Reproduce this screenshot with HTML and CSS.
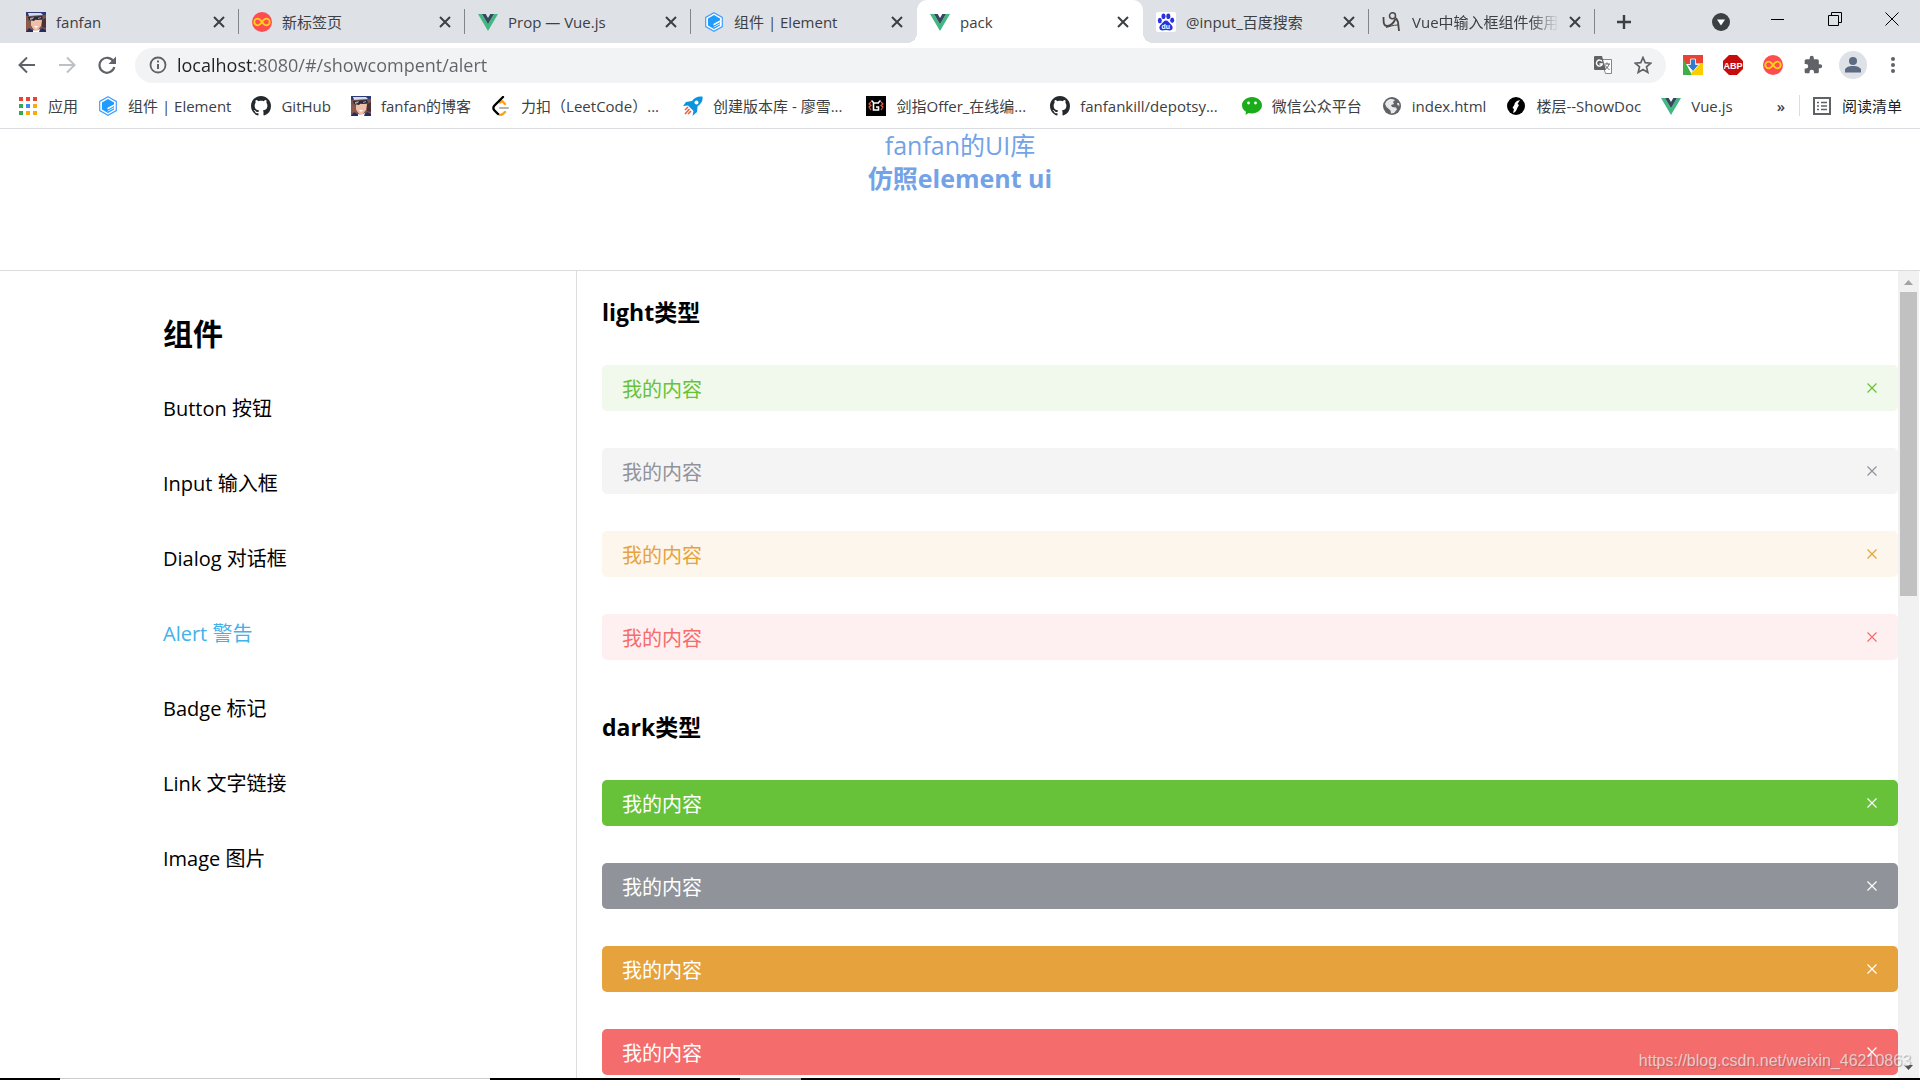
FILE: index.html
```html
<!DOCTYPE html>
<html lang="zh-CN">
<head>
  <meta charset="UTF-8">
  <title>pack</title>
  <link rel="stylesheet" href="styles.css">
</head>
<body>
  <svg class="sprite" aria-hidden="true">
    <symbol id="i-face" viewBox="0 0 20 20">
      <rect width="20" height="20" fill="#7a5550"/>
      <path d="M0 0h20v3L0 4z" fill="#2c3a78"/>
      <path d="M2 1h13l2 2-14 1z" fill="#d9dbe8"/>
      <path d="M5 8h11l-1 6-4 5H9l-4-5z" fill="#f0bfa8"/>
      <path d="M2 5l14-1 1 3-6 1-1-1-2 2-5-1z" fill="#2c2a38"/>
      <path d="M4 6l4-1-1 2-3 1zM12 6l3-1v1l-3 1z" fill="#9aa3bd"/>
      <path d="M0 8l4 2 2 6-4 2-2-3z" fill="#8d5a4c"/>
      <path d="M16 8l4-2v10l-4-1z" fill="#4d2f36"/>
      <path d="M8 14h4l-2 2z" fill="#fff"/>
      <path d="M0 20l3-4 5 3v1zM12 20l4-4 4 2v2z" fill="#232c63"/>
      <path d="M7 18l3 1 4-2-1 3H7z" fill="#fff"/>
    </symbol>
    <symbol id="i-loop" viewBox="0 0 20 20">
      <circle cx="10" cy="10" r="10" fill="#ff4d4f"/>
      <path d="M10 10C8 7.300 7 6.600 5.700 6.600a3.400 3.400 0 0 0 0 6.800C7 13.400 8 12.700 10 10s3-3.400 4.300-3.400a3.400 3.400 0 0 1 0 6.800C13 13.400 12 12.700 10 10z" fill="none" stroke="#ffd21a" stroke-width="1.800"/>
    </symbol>
    <symbol id="i-vue" viewBox="0 0 20 20">
      <path d="M0 2h4l6 10.200L16 2h4L10 19z" fill="#41b883"/>
      <path d="M4 2h3.700L10 6l2.300-4H16l-6 10.200z" fill="#35495e"/>
    </symbol>
    <symbol id="i-element" viewBox="0 0 20 20">
      <path d="M10 .7l8.300 4.700v9.200L10 19.300l-8.300-4.700V5.400z" fill="#fff" stroke="#409eff" stroke-width="1.200"/>
      <path d="M10 3l6 3.400v2L9.500 12v1.300L16 9.700v1.600l-6.500 3.600v.9l6.500-3.500v1.300L10 17l-6-3.500v-7z" fill="#1e9bff"/>
      <path d="M16 8.400L9.800 11.800v1.600L16 10z" fill="#fff"/>
    </symbol>
    <symbol id="i-github" viewBox="0 0 16 16">
      <path fill="#24292e" d="M8 0C3.580 0 0 3.580 0 8c0 3.540 2.290 6.530 5.470 7.590.4.070.55-.17.55-.38 0-.19-.01-.82-.01-1.490-2.010.37-2.530-.49-2.690-.94-.09-.23-.48-.94-.82-1.130-.28-.15-.68-.52-.01-.53.63-.01 1.080.58 1.230.82.72 1.210 1.870.87 2.330.66.070-.52.28-.87.51-1.070-1.780-.2-3.640-.89-3.640-3.950 0-.87.31-1.590.82-2.150-.08-.2-.36-1.020.08-2.120 0 0 .67-.21 2.200.82.64-.18 1.320-.27 2-.27s1.360.09 2 .27c1.530-1.040 2.200-.82 2.200-.82.44 1.100.16 1.920.08 2.120.51.56.82 1.270.82 2.150 0 3.070-1.870 3.750-3.650 3.950.29.25.54.73.54 1.480 0 1.070-.01 1.930-.01 2.200 0 .21.15.46.55.38A8.010 8.010 0 0 0 16 8c0-4.420-3.580-8-8-8z"/>
    </symbol>
    <symbol id="i-close" viewBox="0 0 12 12">
      <path d="M1 1l10 10M11 1L1 11" fill="none" stroke="currentColor" stroke-width="2"/>
    </symbol>
    <symbol id="i-thin-close" viewBox="0 0 10 10">
      <path d="M.5.5l9 9M9.500.5l-9 9" fill="none" stroke="currentColor" stroke-width="1.200"/>
    </symbol>
  </svg>

  <header class="browser">
    <div class="tab-strip">
      <div class="tab"><svg class="icon"><use href="#i-face"/></svg><a class="tab-title" href="#">fanfan</a><button class="tab-close" aria-label="关闭"><svg><use href="#i-close"/></svg></button></div>
      <div class="tab"><svg class="icon"><use href="#i-loop"/></svg><a class="tab-title" href="#">新标签页</a><button class="tab-close" aria-label="关闭"><svg><use href="#i-close"/></svg></button></div>
      <div class="tab"><svg class="icon"><use href="#i-vue"/></svg><a class="tab-title" href="#">Prop — Vue.js</a><button class="tab-close" aria-label="关闭"><svg><use href="#i-close"/></svg></button></div>
      <div class="tab before-active"><svg class="icon"><use href="#i-element"/></svg><a class="tab-title" href="#">组件 | Element</a><button class="tab-close" aria-label="关闭"><svg><use href="#i-close"/></svg></button></div>
      <div class="tab active"><svg class="icon"><use href="#i-vue"/></svg><a class="tab-title" href="#">pack</a><button class="tab-close" aria-label="关闭"><svg><use href="#i-close"/></svg></button></div>
      <div class="tab"><svg class="icon" viewBox="0 0 20 20">
          <rect width="20" height="20" rx="2" fill="#fff"/>
          <g fill="#2932e1"><ellipse cx="3.800" cy="8.500" rx="2" ry="2.700"/><ellipse cx="7.500" cy="4.200" rx="2" ry="2.800"/><ellipse cx="12.300" cy="4.200" rx="2" ry="2.800"/><ellipse cx="16.200" cy="8.200" rx="2" ry="2.700"/><path d="M10 8.500c2 0 3 2 4.500 3.500 2 2 2.500 3 2 4.500-1 3-4 1.500-6.500 1.500s-5.500 1.500-6.500-1.500c-.5-1.500 0-2.500 2-4.500C7 10.500 8 8.500 10 8.500z"/></g>
          <text class="du" x="5.500" y="16.500">du</text>
        </svg><a class="tab-title" href="#">@input_百度搜索</a><button class="tab-close" aria-label="关闭"><svg><use href="#i-close"/></svg></button></div>
      <div class="tab"><svg class="icon" viewBox="0 0 20 20" fill="none" stroke="#4b4545">
          <circle cx="10.500" cy="3.800" r="3" stroke-width="1.500"/><path d="M1.500 5c0 6 0 9 4 9 3 0 6-3 8-7" stroke-width="1.800"/><path d="M14 6l2 4 1 9" stroke-width="1.800"/><path d="M4 15.500c4-1 7-2.500 12-2.500" />
        </svg><a class="tab-title fade" href="#">Vue中输入框组件使用</a><button class="tab-close" aria-label="关闭"><svg><use href="#i-close"/></svg></button></div>
      <button class="new-tab" aria-label="新标签页"><svg viewBox="0 0 16 16"><path d="M8 1v14M1 8h14" stroke="currentColor" stroke-width="2.400"/></svg></button>
      <div class="window-buttons">
        <button aria-label="搜索标签页"><svg viewBox="0 0 18 18"><circle cx="9" cy="9" r="9" fill="#3c4043"/><path d="M5 6.500h8L9 12.500z" fill="#fff"/></svg></button>
        <button aria-label="最小化"><svg class="line" viewBox="0 0 14 14"><path d="M0 7.500h13"/></svg></button>
        <button aria-label="还原"><svg class="line" viewBox="0 0 14 14"><path d="M.5 3.500h10v10h-10zM3.500 3V.5h10v10H11"/></svg></button>
        <button aria-label="关闭窗口"><svg class="line" viewBox="0 0 14 14"><path d="M.5.5l13 13M13.500.5l-13 13"/></svg></button>
      </div>
    </div>

    <div class="toolbar">
      <button aria-label="后退"><svg viewBox="0 0 18 18"><path d="M17 9H2M9 1.500L1.500 9 9 16.500" fill="none" stroke="#5f6368" stroke-width="2"/></svg></button>
      <button aria-label="前进"><svg viewBox="0 0 18 18"><path d="M1 9h15M9 1.500L16.500 9 9 16.500" fill="none" stroke="#bdc1c6" stroke-width="2"/></svg></button>
      <button aria-label="刷新"><svg viewBox="0 0 18 18"><path d="M15.500 5.500A7.500 7.500 0 1 0 16.300 11" fill="none" stroke="#5f6368" stroke-width="2.200"/><path d="M18 .5V8h-7.500z" fill="#5f6368"/></svg></button>
      <div class="address">
        <svg class="info" viewBox="0 0 18 18"><circle cx="9" cy="9" r="7.500" fill="none" stroke="#5f6368" stroke-width="1.800"/><path d="M9 8v5M9 4.500v2" stroke="#5f6368" stroke-width="2"/></svg>
        <input class="url" type="text" aria-label="地址" value="localhost:8080/#/showcompent/alert">
        <button aria-label="翻译"><svg viewBox="0 0 18 18"><path d="M7 3.500h10.500v14h-6z" fill="#fff" stroke="#80868b"/><path d="M0 1a1 1 0 0 1 1-1h7l4 14H1a1 1 0 0 1-1-1z" fill="#5f6368"/><path d="M8 5.500A3 3 0 1 0 8.300 8H5.500" fill="none" stroke="#fff" stroke-width="1.400"/><path d="M10.500 8h5.500M13 6.500V8M15 8c-.5 2.500-2 4-3.500 5M11.500 9.500c1 2 2.500 3.500 4 4" fill="none" stroke="#5f6368"/></svg></button>
        <button aria-label="收藏"><svg viewBox="0 0 18 18"><path d="M9 1.500l2.200 5.200 5.600.5-4.300 3.700 1.300 5.500L9 13.500l-4.800 2.900 1.300-5.500L1.200 7.200l5.600-.5z" fill="none" stroke="#5f6368" stroke-width="1.700"/></svg></button>
      </div>
      <div class="extensions">
        <button aria-label="下载"><svg viewBox="0 0 20 20"><path d="M0 0h20v9H0z" fill="#ea4335"/><path d="M0 3l9 17H0z" fill="#3fae49"/><path d="M20 8v12H8l4-12z" fill="#fc0"/><path d="M7.500 4h5v5.500H16L10 16.500 4 9.500h3.500z" fill="#2f7bd0" stroke="#fff" stroke-width=".8"/></svg></button>
        <button aria-label="ABP"><svg viewBox="0 0 20 20"><path d="M6 0h8l6 6v8l-6 6H6l-6-6V6z" fill="#c70d0c"/><text class="abp" x="10" y="13.500">ABP</text></svg></button>
        <button aria-label="Infinity"><svg><use href="#i-loop"/></svg></button>
        <button aria-label="扩展程序"><svg viewBox="0 0 24 24"><path fill="#5f6368" d="M20.500 11H19V7c0-1.100-.9-2-2-2h-4V3.500a2.500 2.500 0 0 0-5 0V5H4c-1.100 0-2 .9-2 2v3.800h1.500a2.700 2.700 0 0 1 0 5.400H2V20c0 1.100.9 2 2 2h3.800v-1.500a2.700 2.700 0 0 1 5.400 0V22H17c1.100 0 2-.9 2-2v-4h1.500a2.500 2.500 0 0 0 0-5z"/></svg></button>
        <button class="profile" aria-label="用户"><svg viewBox="0 0 18 18"><circle cx="9" cy="5" r="4" fill="#5a6b82"/><path d="M1 16.500V14c0-2.500 4-4 8-4s8 1.500 8 4v2.500z" fill="#5a6b82"/></svg></button>
        <button aria-label="菜单"><svg viewBox="0 0 20 20" fill="#5f6368"><circle cx="10" cy="4" r="2"/><circle cx="10" cy="10" r="2"/><circle cx="10" cy="16" r="2"/></svg></button>
      </div>
    </div>

    <nav class="bookmarks">
      <a href="#"><svg class="icon" viewBox="0 0 20 20"><g fill="#ea4335"><path d="M1 1h4v4H1zM8 1h4v4H8zM15 1h4v4h-4z"/></g><path d="M1 8h4v4H1zM1 15h4v4H1z" fill="#34a853"/><path d="M8 8h4v4H8z" fill="#4285f4"/><path d="M15 8h4v4h-4zM8 15h4v4H8zM15 15h4v4h-4z" fill="#fbab05"/></svg>应用</a>
      <a href="#"><svg class="icon"><use href="#i-element"/></svg>组件 | Element</a>
      <a href="#"><svg class="icon"><use href="#i-github"/></svg>GitHub</a>
      <a href="#"><svg class="icon"><use href="#i-face"/></svg>fanfan的博客</a>
      <a class="cut" href="#"><svg class="icon" viewBox="0 0 20 20" fill="none" stroke-width="2.400" stroke-linecap="round"><path d="M9 6.500l2-1.500 3 3M8 18.500c2 1 4 0 6-2.500" stroke="#ffa116"/><path d="M9 12h8" stroke="#b3b3b3" stroke-width="2"/><path d="M12 1L3.500 9.500c-1.500 1.500-1.500 3.500 0 5L7 18" stroke="#000"/></svg>力扣（LeetCode）...</a>
      <a class="cut" href="#"><svg class="icon" viewBox="0 0 20 20"><path d="M19.500.5c-5-.5-8 1-10.500 4.500L3 6 0 10l5-.5 5.500 5.500-1 5 4.500-4 .5-5.500c4-3 5.500-6 5-10z" fill="#0b93dd"/><circle cx="13.500" cy="6.500" r="2" fill="#fff"/><path d="M5 11l-3 3M6.500 13L2 18M8 15l-3 3" stroke="#e8603c" stroke-width="1.500"/></svg>创建版本库 - 廖雪...</a>
      <a class="cut" href="#"><svg class="icon" viewBox="0 0 20 20"><rect width="20" height="20" fill="#000"/><path d="M13 7H7.500v7h5V11H10M5.500 4.500l2 2M14.500 4.500l-2 2" fill="none" stroke="#fff" stroke-width="1.600"/><path d="M5 6L3 8l2 1.500L3 11l2 3M15 6l2 2-2 1.500 2 1.500-2 3" fill="none" stroke="#e0603f" stroke-width="1.200"/></svg>剑指Offer_在线编...</a>
      <a class="cut" href="#"><svg class="icon"><use href="#i-github"/></svg>fanfankill/depotsy...</a>
      <a href="#"><svg class="icon" viewBox="0 0 20 20"><path d="M10 1c5.500 0 10 3.700 10 8.300s-4.500 8.200-10 8.200c-1.500 0-2.500-.2-3.500-.5L3.500 19l.5-3.200C1.500 14.300 0 12 0 9.300 0 4.700 4.500 1 10 1z" fill="#1aad19"/><circle cx="6.500" cy="7" r="1.400" fill="#fff"/><circle cx="13.500" cy="7" r="1.400" fill="#fff"/></svg>微信公众平台</a>
      <a href="#"><svg class="icon" viewBox="0 0 20 20"><circle cx="10" cy="10" r="9" fill="#5f6368"/><path d="M10 3l3 1-2 2 1 2-3 1 1 2 4 .5 1 2-3 3.500-3 .5-.5-3-4-3.500L3 8c1-3 3-5 7-5zM15 7h2l.5 3-2-1z" fill="#fff" opacity=".85"/></svg>index.html</a>
      <a href="#"><svg class="icon" viewBox="0 0 20 20"><circle cx="10" cy="10" r="9" fill="#000"/><path d="M14 4c-4 1-5 2.500-5.500 4.500L6.500 12l1.500 1-1 4c2.500-1 3.500-2 4-4.500L13 9l-1.500-1z" fill="#fff"/></svg>楼层--ShowDoc</a>
      <a href="#"><svg class="icon"><use href="#i-vue"/></svg>Vue.js</a>
      <button class="more" aria-label="更多书签">»</button>
      <a class="reading-list" href="#"><svg class="icon" viewBox="0 0 20 20"><path d="M2 2h16v16H2z" fill="none" stroke="#5f6368" stroke-width="2"/><path d="M5 6.500h2M9 6.500h6M5 10h2M9 10h6M5 13.500h2M9 13.500h6" stroke="#5f6368" stroke-width="1.600"/></svg>阅读清单</a>
    </nav>
  </header>

  <div class="page-header">
    <div>fanfan的UI库</div>
    <strong>仿照element ui</strong>
  </div>

  <div class="page">
    <aside class="sidebar">
      <h2>组件</h2>
      <a href="#">Button 按钮</a>
      <a href="#">Input 输入框</a>
      <a href="#">Dialog 对话框</a>
      <a class="current" href="#">Alert 警告</a>
      <a href="#">Badge 标记</a>
      <a href="#">Link 文字链接</a>
      <a href="#">Image 图片</a>
    </aside>

    <main class="content">
      <h3>light类型</h3>
      <div class="alerts">
        <div class="alert success">我的内容<button aria-label="关闭"><svg><use href="#i-thin-close"/></svg></button></div>
        <div class="alert info">我的内容<button aria-label="关闭"><svg><use href="#i-thin-close"/></svg></button></div>
        <div class="alert warning">我的内容<button aria-label="关闭"><svg><use href="#i-thin-close"/></svg></button></div>
        <div class="alert error">我的内容<button aria-label="关闭"><svg><use href="#i-thin-close"/></svg></button></div>
      </div>
      <h3>dark类型</h3>
      <div class="alerts dark">
        <div class="alert success">我的内容<button aria-label="关闭"><svg><use href="#i-thin-close"/></svg></button></div>
        <div class="alert info">我的内容<button aria-label="关闭"><svg><use href="#i-thin-close"/></svg></button></div>
        <div class="alert warning">我的内容<button aria-label="关闭"><svg><use href="#i-thin-close"/></svg></button></div>
        <div class="alert error">我的内容<button aria-label="关闭"><svg><use href="#i-thin-close"/></svg></button></div>
      </div>
    </main>

    <div class="scrollbar">
      <svg viewBox="0 0 9 5"><path d="M0 5h9L4.500 0z" fill="#a3a3a3"/></svg>
      <div class="thumb"></div>
      <svg viewBox="0 0 9 5"><path d="M0 0h9L4.500 5z" fill="#505050"/></svg>
    </div>
  </div>

  <footer class="taskbar">
    <span class="task-window"></span>
    <span class="task-button"></span>
  </footer>

  <div class="watermark">https://blog.csdn.net/weixin_46210863</div>
</body>
</html>
```

FILE: styles.css
```css
* {
  box-sizing: border-box;
}
body {
  margin: 0;
  height: 100vh;
  display: flex;
  flex-direction: column;
  overflow: hidden;
  font-family: "Open Sans", "Noto Sans CJK SC", sans-serif;
  font-size: 20px;
  color: #000;
  background: #fff;
}
a {
  color: inherit;
  text-decoration: none;
}
button {
  padding: 0;
  border: none;
  background: none;
  color: inherit;
  font: inherit;
  display: flex;
  align-items: center;
  justify-content: center;
}
svg {
  display: block;
  flex: none;
}
.sprite {
  position: absolute;
  width: 0;
  height: 0;
}
.icon {
  width: 20px;
  height: 20px;
}

/* browser window */
.browser {
  flex: none;
  font-size: 15px;
  color: #3c4043;
  border-bottom: 1px solid #dadce0;
}
.tab-strip {
  display: flex;
  align-items: center;
  height: 43px;
  padding-left: 13px;
  background: #dee1e6;
}
.tab {
  position: relative;
  display: flex;
  align-items: center;
  gap: 10px;
  width: 226px;
  height: 43px;
  padding: 0 14px 0 13px;
}
.tab::after {
  content: "";
  position: absolute;
  right: 0;
  top: 9px;
  width: 1px;
  height: 25px;
  background: #80868b;
}
.tab.active::after,
.tab.before-active::after {
  display: none;
}
.tab.active {
  background: #fff;
  border-radius: 10px 10px 0 0;
}
.tab.active::before {
  content: "";
  position: absolute;
  left: -10px;
  right: -10px;
  bottom: 0;
  height: 10px;
  background:
    radial-gradient(circle at 0 0, transparent 10px, #fff 10px) left / 10px 10px no-repeat,
    radial-gradient(circle at 100% 0, transparent 10px, #fff 10px) right / 10px 10px no-repeat;
}
.tab-title {
  flex: 1;
  min-width: 0;
  overflow: hidden;
  white-space: nowrap;
}
.fade {
  -webkit-mask-image: linear-gradient(to right, #000 80%, transparent);
  mask-image: linear-gradient(to right, #000 80%, transparent);
}
.tab-close svg {
  width: 12px;
  height: 12px;
}
.new-tab {
  width: 58px;
}
.new-tab svg {
  width: 16px;
  height: 16px;
}
.window-buttons {
  display: flex;
  margin-left: auto;
}
.window-buttons button {
  width: 57px;
}
.window-buttons svg {
  width: 18px;
  height: 18px;
}
.window-buttons .line {
  width: 14px;
  height: 14px;
  margin-bottom: 6px;
  fill: none;
  stroke: #000;
}
.du {
  font: bold 7px "Liberation Sans", sans-serif;
  fill: #fff;
}
.abp {
  font: bold 9px "Liberation Sans", sans-serif;
  fill: #fff;
  text-anchor: middle;
}
.toolbar {
  display: flex;
  align-items: center;
  height: 44px;
  padding: 0 7px;
}
.toolbar button {
  width: 40px;
  height: 34px;
}
.toolbar svg {
  width: 18px;
  height: 18px;
}
.address {
  flex: 1;
  display: flex;
  align-items: center;
  height: 35px;
  margin: 0 7px 0 8px;
  padding: 0 3px 0 14px;
  border-radius: 18px;
  background: #f1f3f4;
}
.url {
  flex: 1;
  min-width: 0;
  margin-left: 10px;
  padding: 0;
  border: none;
  outline: none;
  font: 18px "Open Sans", "Noto Sans CJK SC", sans-serif;
  color: transparent;
  /* host dark, path grey */
  background: linear-gradient(to right, #202124 76px, #5f6368 76px);
  -webkit-background-clip: text;
  background-clip: text;
}
.extensions {
  display: flex;
  align-items: center;
}
.extensions button svg {
  width: 20px;
  height: 20px;
}
.extensions .profile {
  width: 28px;
  height: 28px;
  margin: 0 6px;
  border-radius: 50%;
  background: #dee1e6;
}
.extensions .profile svg {
  width: 18px;
  height: 18px;
}
.bookmarks {
  display: flex;
  align-items: center;
  gap: 20px;
  height: 41px;
  padding: 0 18px 4px;
  white-space: nowrap;
}
.bookmarks a {
  display: flex;
  align-items: center;
  gap: 10px;
}
.bookmarks .cut {
  padding-right: 4px;
}
.more {
  margin: 0 -6px 0 auto;
  font-weight: 600;
}
.bookmarks .reading-list {
  padding-left: 12px;
  border-left: 1px solid #dadce0;
  color: #202124;
}

/* page */
.page-header {
  flex: none;
  height: 142px;
  border-bottom: 1px solid #dcdcdc;
  text-align: center;
  font-size: 25px;
  line-height: 33px;
  color: #73a3e6;
}
.page {
  flex: 1;
  min-height: 0;
  display: flex;
}
.sidebar {
  width: 30%;
  padding: 43px 0 0 163px;
}
.sidebar h2 {
  margin: 0 0 40px;
  font-size: 30px;
  line-height: 40px;
}
.sidebar a {
  display: block;
  margin-bottom: 45px;
  line-height: 30px;
}
.sidebar .current {
  color: #41b1ea;
}
.content {
  flex: 1;
  min-width: 0;
  overflow: hidden;
  padding-left: 25px;
  border-left: 1px solid #dcdcdc;
}
.content h3 {
  margin: 26px 0 38px;
  font-size: 23px;
  line-height: 30px;
}
.alerts {
  display: flex;
  flex-direction: column;
  gap: 37px;
}
.content .alerts + h3 {
  margin-top: 52px;
}
.alert {
  display: flex;
  align-items: center;
  justify-content: space-between;
  height: 46px;
  padding: 0 21px 0 20px;
  border-radius: 5px;
}
.alert svg {
  width: 10px;
  height: 10px;
}
.success {
  color: #67c23a;
  background: #f0f9eb;
}
.info {
  color: #909399;
  background: #f4f4f5;
}
.warning {
  color: #e6a23c;
  background: #fdf6ec;
}
.error {
  color: #f56c6c;
  background: #fef0f0;
}
.dark .alert {
  color: #fff;
}
.dark .success {
  background: #67c23a;
}
.dark .info {
  background: #909399;
}
.dark .warning {
  background: #e6a23c;
}
.dark .error {
  background: #f56c6c;
}
.scrollbar {
  display: flex;
  flex-direction: column;
  align-items: center;
  width: 21px;
  margin-right: 1px;
  padding: 9px 0 8px;
  background: #f1f1f1;
}
.scrollbar svg {
  width: 9px;
  height: 5px;
}
.thumb {
  width: 17px;
  height: 304px;
  margin: 7px 0 auto;
  background: #c1c1c1;
}
.taskbar {
  flex: none;
  display: flex;
  height: 2px;
  padding-left: 60px;
  background: #000;
}
.task-window {
  width: 430px;
  background: #fff;
  border-top: 1px solid #ccc;
}
.task-button {
  width: 61px;
  margin-left: 250px;
  background: #999;
}
.watermark {
  position: absolute;
  right: 9px;
  bottom: 10px;
  font: 16px "Liberation Sans", sans-serif;
  color: rgba(255, 255, 255, 0.65);
  text-shadow: 1px 1px 1px rgba(100, 100, 100, 0.5);
}
```
